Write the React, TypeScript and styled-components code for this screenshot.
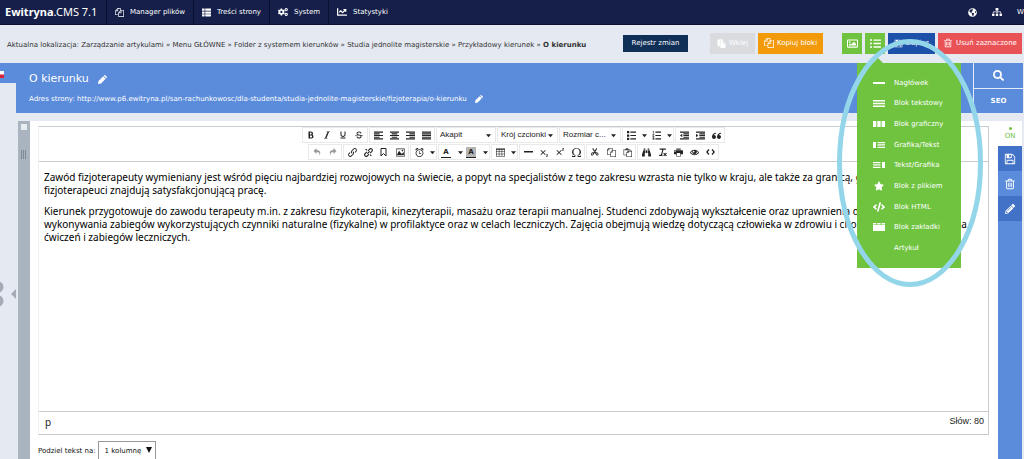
import React from 'react';
import styled, { createGlobalStyle } from 'styled-components';
import {
  FaBinoculars, FaChartLine, FaCode, FaCogs, FaGlobeAmericas, FaListUl, FaPaste, FaPencilAlt,
  FaRegImage, FaSearch, FaSitemap, FaStar, FaThList,
} from 'react-icons/fa';
import {
  ImAlarm, ImBold, ImCopy, ImEye, ImImage, ImIndentDecrease, ImIndentIncrease,
  ImItalic, ImLink, ImList, ImListNumbered, ImOmega, ImPaste, ImPrinter, ImQuotesLeft, ImRedo2,
  ImScissors, ImStrikethrough, ImSubscript, ImSuperscript, ImTable2, ImUnderline, ImUndo2,
  ImParagraphCenter, ImParagraphJustify, ImParagraphLeft, ImParagraphRight,
} from 'react-icons/im';

const color = {
  navy: '#151f49',
  page: '#e5e9f1',
  blue: '#5b8cdb',
  deepBlue: '#4272c8',
  green: '#6fc33f',
  rail: '#a9b4c0',
  line: '#c9cccd',
};
const ui = '"DejaVu Sans", Verdana, sans-serif';

const GlobalStyle = createGlobalStyle`
  *, *::before, *::after { box-sizing: border-box; }
  html, body { margin: 0; overflow: hidden; }
  body { background: ${color.page}; color: #333; font: 7px/10px ${ui}; }
  button, select { font: inherit; color: inherit; margin: 0; padding: 0; border: 0; background: none; }
  a { color: inherit; text-decoration: none; }
  svg { display: block; flex: none; }
`;

const Page = styled.div`
  display: flex;
  flex-direction: column;
  min-height: 100vh;
`;

/* Top navigation */
const Nav = styled.nav`
  display: flex;
  height: 25px;
  background: ${color.navy};
  border-bottom: 1px solid #0c1230;
  color: #fff;
`;
const Brand = styled.a`
  display: flex;
  align-items: center;
  width: 106px;
  padding-left: 5px;
  font: 11px/14px "Noto Sans", sans-serif;
`;
const NavLink = styled.a`
  display: flex;
  align-items: center;
  gap: 6px;
  padding: 0 8px;
  border-left: 1px solid #0a1030;
`;
const NavTools = styled.div`
  display: flex;
  align-items: center;
  gap: 15px;
  width: 56px;
  margin-left: auto;
  overflow: hidden;
`;

/* Breadcrumb and page actions */
const ActionBar = styled.div`
  display: flex;
  align-items: center;
  height: 38px;
  padding: 0 2px 2px 7px;
`;
const Crumbs = styled.div`
  flex: 1;
  white-space: nowrap;
  padding-top: 4px;
`;
const Actions = styled.div`
  display: flex;
  align-items: center;
  gap: 3px;
  color: #fff;
`;
const Action = styled.button<{ $bg: string; $w: number; $small?: boolean; $after?: number }>`
  display: flex;
  align-items: center;
  justify-content: center;
  gap: 3px;
  width: ${p => p.$w}px;
  height: ${p => (p.$small ? 17 : 21)}px;
  margin-right: ${p => p.$after ?? 0}px;
  background: ${p => p.$bg};
  white-space: nowrap;
`;
const MenuAnchor = styled.div`
  position: relative;
`;
const BlockMenu = styled.ul`
  position: absolute;
  z-index: 2;
  top: 30px;
  left: -8px;
  display: grid;
  grid-auto-rows: 1fr;
  width: 104px;
  height: 205px;
  margin: 0;
  padding: 10px 0 9px;
  list-style: none;
  background: ${color.green};
  &::before {
    content: '';
    position: absolute;
    left: 16px;
    top: -5px;
    border: 5px solid transparent;
    border-top: 0;
    border-bottom-color: ${color.green};
  }
`;
const BlockItem = styled.button`
  display: grid;
  grid-template-columns: 12px 1fr;
  column-gap: 9px;
  align-items: center;
  width: 100%;
  height: 100%;
  padding-left: 16px;
  text-align: left;
  svg { justify-self: center; }
`;

/* Article heading */
const Main = styled.div`
  display: grid;
  grid-template-columns: 16px 1fr;
  flex: 1;
`;
const Side = styled.aside`
  display: flex;
  flex-direction: column;
`;
const LangTab = styled.div`
  height: 20px;
  padding-top: 8px;
  background: ${color.blue};
`;
const SideTools = styled.div`
  display: flex;
  align-items: center;
  justify-content: space-between;
  margin-top: 198px;
`;
const Content = styled.main`
  display: flex;
  flex-direction: column;
  gap: 8px;
  padding-right: 1px;
`;
const Heading = styled.header`
  display: flex;
  height: 50px;
  background: ${color.blue};
  color: #fff;
`;
const Titles = styled.div`
  flex: 1;
  padding: 8px 0 0 13px;
`;
const Title = styled.h1`
  display: flex;
  align-items: center;
  gap: 9px;
  margin: 0 0 7px;
  font: 11px/16px ${ui};
`;
const Address = styled.div`
  display: flex;
  align-items: center;
  gap: 8px;
`;
const HeadTools = styled.div`
  display: grid;
  grid-template-rows: 25px 1fr;
  width: 50px;
  border-left: 1px solid #e4ecf9;
  font-weight: bold;
`;
const HeadButton = styled.button`
  display: flex;
  align-items: center;
  justify-content: center;
  & + & { border-top: 1px solid #e4ecf9; }
`;

/* Editor */
const Workspace = styled.section`
  display: flex;
  flex: 1;
  padding: 0 1px 0 2px;
`;
const DragRail = styled.div`
  display: flex;
  flex-direction: column;
  align-items: center;
  gap: 20px;
  width: 12px;
  padding-top: 3px;
  background: ${color.rail};
`;
const Tick = styled.input`
  appearance: none;
  width: 6px;
  height: 6px;
  margin: 0;
  background: #e9ecf0;
`;
const Card = styled.div`
  flex: 1;
  padding: 5px 9px 0 8px;
  background: #fff;
`;
const Editor = styled.div`
  display: flex;
  flex-direction: column;
  border: 1px solid ${color.line};
  border-left-color: #f1f1f1;
  color: #222;
`;
const Toolbar = styled.div`
  display: grid;
  row-gap: 1px;
  padding-bottom: 1px;
  border-bottom: 1px solid ${color.line};
`;
const ToolRow = styled.div`
  display: flex;
  justify-content: center;
  gap: 1px;
`;
const Group = styled.div`
  display: flex;
  height: 16px;
  border: 1px solid #e9e9e9;
`;
const Tool = styled.button<{ $split?: boolean; $faded?: boolean }>`
  display: flex;
  align-items: center;
  justify-content: space-between;
  width: ${p => (p.$split ? 25 : 16)}px;
  padding: 0 ${p => (p.$split ? 1 : 4)}px 0 4px;
  opacity: ${p => (p.$faded ? 0.45 : 1)};
`;
const Pick = styled.label<{ $w: number }>`
  display: flex;
  align-items: center;
  width: ${p => p.$w}px;
  padding: 0 4px 0 3px;
  font: 8px/12px "Liberation Sans", Arial, sans-serif;
  select { appearance: none; flex: 1; min-width: 0; }
`;
const Swatch = styled.span<{ $bg?: string }>`
  width: 10px;
  margin-left: -2px;
  border-bottom: 1px solid #222;
  background: ${p => p.$bg ?? 'none'};
  font-weight: bold;
  text-align: center;
`;
const Article = styled.article`
  height: 249px;
  padding: 9px 0 0 5px;
  color: #000;
  font: 10px/13px "Noto Sans", Tahoma, sans-serif;
  white-space: nowrap;
  overflow: hidden;
  p { margin: 0 0 8px; }
`;
const StatusBar = styled.footer`
  display: flex;
  justify-content: space-between;
  height: 23px;
  padding: 4px 4px 0 6px;
  border-top: 1px solid ${color.line};
  font: 10px/13px "Noto Sans", sans-serif;
`;
const Words = styled.span`
  font: 9px/11px "Liberation Sans", Arial, sans-serif;
`;
const Columns = styled.label`
  display: flex;
  align-items: center;
  gap: 2px;
  height: 20px;
  margin-top: 6px;
  color: #111;
`;
const ColumnPick = styled.span`
  display: flex;
  align-items: center;
  width: 58px;
  height: 20px;
  padding: 0 3px 0 6px;
  border: 1px solid #999;
  select { appearance: none; flex: 1; }
`;
const BlockTools = styled.div`
  display: flex;
  flex-direction: column;
  width: 24px;
  background: ${color.blue};
  color: #fff;
`;
const Status = styled.div`
  height: 25px;
  padding-top: 5px;
  background: #fff;
  color: ${color.green};
  text-align: center;
  line-height: 9px;
  &::before {
    content: '';
    display: block;
    width: 3px;
    height: 3px;
    margin: 1px auto 2px;
    border-radius: 50%;
    background: ${color.green};
  }
`;
const BlockTool = styled.button<{ $dark?: boolean }>`
  display: flex;
  align-items: center;
  justify-content: center;
  height: 25px;
  background: ${p => (p.$dark ? color.deepBlue : color.blue)};
`;
const Marker = styled.svg`
  position: absolute;
  z-index: 3;
  top: 36px;
  right: 38px;
  pointer-events: none;
`;

const Fa = ({ d, size }: { d: string; size: number }) => (
  <svg width={size} height={size} viewBox="0 0 1792 1792" fill="currentColor"><path d={d} /></svg>
);
const filesPath = 'M1696 384q40 0 68 28t28 68v1216q0 40-28 68t-68 28h-960q-40 0-68-28t-28-68v-288h-544q-40 0-68-28t-28-68v-672q0-40 20-88t48-76l408-408q28-28 76-48t88-20h416q40 0 68 28t28 68v328q68-40 128-40h416zm-544 213l-299 299h299v-299zm-640-384l-299 299h299v-299zm196 647l316-316v-416h-384v416q0 40-28 68t-68 28h-416v640h512v-256q0-40 20-88t48-76zm956 804v-1152h-384v416q0 40-28 68t-68 28h-416v640h896z';
const floppyPath = 'M512 1536h768v-384h-768v384zm896 0h128v-896q0-14-10-38.5t-20-34.5l-281-281q-10-10-34-20t-39-10v416q0 40-28 68t-68 28h-576q-40 0-68-28t-28-68v-416h-128v1280h128v-416q0-40 28-68t68-28h832q40 0 68 28t28 68v416zm-384-928v-320q0-13-9.5-22.5t-22.5-9.5h-192q-13 0-22.5 9.5t-9.5 22.5v320q0 13 9.5 22.5t22.5 9.5h192q13 0 22.5-9.5t9.5-22.5zm640 32v928q0 40-28 68t-68 28h-1344q-40 0-68-28t-28-68v-1344q0-40 28-68t68-28h928q40 0 88 20t76 48l280 280q28 28 48 76t20 88z';
const trashPath = 'M704 736v576q0 14-9 23t-23 9h-64q-14 0-23-9t-9-23v-576q0-14 9-23t23-9h64q14 0 23 9t9 23zm256 0v576q0 14-9 23t-23 9h-64q-14 0-23-9t-9-23v-576q0-14 9-23t23-9h64q14 0 23 9t9 23zm256 0v576q0 14-9 23t-23 9h-64q-14 0-23-9t-9-23v-576q0-14 9-23t23-9h64q14 0 23 9t9 23zm128 724v-948h-896v948q0 22 7 40.5t14.5 27 10.5 8.5h832q3 0 10.5-8.5t14.5-27 7-40.5zm-672-1076h448l-48-117q-7-9-17-11h-317q-10 2-17 11zm928 32v64q0 14-9 23t-23 9h-96v948q0 83-47 143.5t-113 60.5h-832q-66 0-113-58.5t-47-141.5v-952h-96q-14 0-23-9t-9-23v-64q0-14 9-23t23-9h309l70-167q15-37 54-63t79-26h320q40 0 79 26t54 63l70 167h309q14 0 23 9t9 23z';

const Caret = ({ w = 5 }: { w?: number }) => (
  <svg width={w} height={w} viewBox="0 0 6 6" fill="currentColor"><path d="M0 1.5h6L3 5z" /></svg>
);
const SelectArrow = () => (
  <svg width="6" height="8" viewBox="0 0 6 8" fill="currentColor"><path d="M0 0h6L3 6z" /></svg>
);
const Pencil = ({ size }: { size: number }) => (
  <svg width={size} height={size} viewBox="0 0 10 10" fill="currentColor"><path d="M0 10l.6-3.400L5.800 1.500l2.700 2.700L3.400 9.400zM6.400.9l.7-.7q.5-.4 1 0l1.700 1.700q.4.500 0 1l-.7.700z" /></svg>
);
const Bars = ({ d }: { d: string }) => (
  <svg width="12" height="8" viewBox="0 0 12 8" fill="#fff"><path d={d} /></svg>
);
const Unlink = () => (
  <svg width="9" height="9" viewBox="0 0 16 16" fill="none" stroke="currentColor" strokeWidth="2">
    <path d="M7 5l3-3a2.8 2.8 0 0 1 4 4l-3 3M9 11l-3 3a2.8 2.8 0 0 1-4-4l3-3M3 2l2 2M13 14l-2-2M6 10l4-4" />
  </svg>
);
const ClearFormat = () => (
  <svg width="9" height="9" viewBox="0 0 16 16" fill="none" stroke="currentColor" strokeWidth="2">
    <path d="M3 2h11M9 2L6 13M2 13h6M10 9l5 5M15 9l-5 5" />
  </svg>
);
const Rule = () => (
  <svg width="9" height="8" viewBox="0 0 9 8"><path d="M0 3h9v1.500H0z" fill="currentColor" /></svg>
);

const blocks: [string, React.ReactNode][] = [
  ['Nagłówek', <Bars d="M0 3h12v2H0z" />],
  ['Blok tekstowy', <Bars d="M0 1h12v1.500H0zM0 3.700h12v1.500H0zM0 6.400h12V8H0z" />],
  ['Blok graficzny', <Bars d="M0 1h3.300v6H0zM4.300 1h3.300v6H4.300zM8.600 1H12v6H8.600z" />],
  ['Grafika/Tekst', <Bars d="M0 1h3v6H0zM4.500 1H12v1.300H4.500zM4.500 3.300H12v1.300H4.500zM4.500 5.700H12V7H4.500z" />],
  ['Tekst/Grafika', <Bars d="M9 1h3v6H9zM0 1h7.500v1.300H0zM0 3.300h7.500v1.300H0zM0 5.700h7.500V7H0z" />],
  ['Blok z plikiem', <FaStar size={10} />],
  ['Blok HTML', <FaCode size={12} />],
  ['Blok zakładki', <Bars d="M0 0h3.300v1.500H0zM4.300 0h3.300v1.500H4.300zM8.600 0H12v1.500H8.600zM0 2h12v6H0z" />],
  ['Artykuł', <span />],
];

type ToolSpec = { name: string; icon: React.ReactNode; split?: boolean; faded?: boolean };
const t = (name: string, icon: React.ReactNode, split = false, faded = false): ToolSpec => ({ name, icon, split, faded });

const inline = [t('Pogrubienie', <ImBold size={8} />), t('Kursywa', <ImItalic size={8} />), t('Podkreślenie', <ImUnderline size={8} />), t('Przekreślenie', <ImStrikethrough size={8} />)];
const align = [t('Do lewej', <ImParagraphLeft size={9} />), t('Do środka', <ImParagraphCenter size={9} />), t('Do prawej', <ImParagraphRight size={9} />), t('Wyjustuj', <ImParagraphJustify size={9} />)];
const lists = [t('Lista wypunktowana', <ImList size={9} />, true), t('Lista numerowana', <ImListNumbered size={9} />, true)];
const indent = [t('Zmniejsz wcięcie', <ImIndentDecrease size={9} />), t('Zwiększ wcięcie', <ImIndentIncrease size={9} />), t('Cytat', <ImQuotesLeft size={9} />)];
const secondRow: ToolSpec[][] = [
  [t('Cofnij', <ImUndo2 size={8} />, false, true), t('Ponów', <ImRedo2 size={8} />, false, true)],
  [t('Wstaw łącze', <ImLink size={9} />), t('Usuń łącze', <Unlink />), t('Zakładka', <svg width="7" height="9" viewBox="0 0 7 9" fill="none" stroke="currentColor"><path d="M1 .5h5v7.500L3.500 5.500 1 8z" /></svg>), t('Obraz', <ImImage size={9} />)],
  [t('Data', <ImAlarm size={9} />, true)],
  [t('Kolor tekstu', <Swatch>A</Swatch>, true), t('Kolor tła', <Swatch $bg="#b5b5b5">A</Swatch>, true)],
  [t('Tabela', <ImTable2 size={9} />, true)],
  [t('Linia pozioma', <Rule />), t('Indeks dolny', <ImSubscript size={9} />), t('Indeks górny', <ImSuperscript size={9} />), t('Znak specjalny', <ImOmega size={9} />)],
  [t('Wytnij', <ImScissors size={8} />), t('Kopiuj', <ImCopy size={9} />), t('Wklej', <ImPaste size={9} />)],
  [t('Znajdź', <FaBinoculars size={9} />), t('Usuń formatowanie', <ClearFormat />), t('Drukuj', <ImPrinter size={9} />), t('Podgląd', <ImEye size={9} />), t('Kod źródłowy', <svg width="9" height="8" viewBox="0 0 9 8" fill="none" stroke="currentColor" strokeWidth="1.2"><path d="M3 1.500L.8 4 3 6.500M6 1.500L8.200 4 6 6.500" /></svg>)],
];

const Tools = ({ items }: { items: ToolSpec[] }) => (
  <Group>
    {items.map(i => (
      <Tool key={i.name} aria-label={i.name} $split={i.split} $faded={i.faded}>
        {i.icon}
        {i.split && <Caret />}
      </Tool>
    ))}
  </Group>
);
const Dropdown = ({ text, w, name }: { text: string; w: number; name: string }) => (
  <Group>
    <Pick $w={w}>
      <select aria-label={name}><option>{text}</option></select>
      <Caret />
    </Pick>
  </Group>
);

export default function App() {
  return (
    <Page>
      <GlobalStyle />
      <Nav>
        <Brand href="#"><b>Ewitryna</b>.CMS 7.1</Brand>
        <NavLink href="#"><Fa d={filesPath} size={9} />Manager plików</NavLink>
        <NavLink href="#"><FaThList size={9} />Treści strony</NavLink>
        <NavLink href="#"><FaCogs size={10} />System</NavLink>
        <NavLink href="#"><FaChartLine size={10} />Statystyki</NavLink>
        <NavTools>
          <a href="#" aria-label="Strona"><FaGlobeAmericas size={9} /></a>
          <a href="#" aria-label="Mapa strony"><FaSitemap size={10} /></a>
          <a href="#">W</a>
        </NavTools>
      </Nav>

      <ActionBar>
        <Crumbs>
          Aktualna lokalizacja: Zarządzanie artykulami » Menu GŁÓWNE » Folder z systemem kierunków » Studia jednolite
          magisterskie » Przykładowy kierunek » <b>O kierunku</b>
        </Crumbs>
        <Actions>
          <Action $bg="#0f2f57" $w={65} $small $after={19}>Rejestr zmian</Action>
          <Action $bg="#d9dbdf" $w={45}><FaPaste size={9} />Wklej</Action>
          <Action $bg="#f39a0a" $w={65} $after={16}><Fa d={filesPath} size={10} />Kopiuj bloki</Action>
          <Action $bg={color.green} $w={20} aria-label="Grafika"><FaRegImage size={11} /></Action>
          <MenuAnchor>
            <Action $bg={color.green} $w={20} aria-label="Dodaj blok"><FaListUl size={11} /></Action>
            <BlockMenu>
              {blocks.map(([name, icon]) => (
                <li key={name}><BlockItem>{icon}{name}</BlockItem></li>
              ))}
            </BlockMenu>
          </MenuAnchor>
          <Action $bg="#1d50a8" $w={47}><Fa d={floppyPath} size={9} />Zapisz</Action>
          <Action $bg="#ea5356" $w={84}><Fa d={trashPath} size={10} />Usuń zaznaczone</Action>
        </Actions>
      </ActionBar>

      <Main>
        <Side>
          <LangTab>
            <svg width="4" height="7" viewBox="0 0 4 7"><path fill="#fff" d="M0 0h4v4H0z" /><path fill="#d8213b" d="M0 3.500h4V7H0z" /></svg>
          </LangTab>
          <SideTools>
            <svg width="4" height="26" viewBox="0 0 4 26" fill="#a5abb5"><circle cx="-2" cy="6" r="5.500" /><circle cx="-2" cy="20" r="5.500" /></svg>
            <svg width="5" height="10" viewBox="0 0 5 10" fill="#a5abb5"><path d="M5 0v10L0 5z" /></svg>
          </SideTools>
        </Side>
        <Content>
          <Heading>
            <Titles>
              <Title>O kierunku <Pencil size={9} /></Title>
              <Address>
                <a href="#">Adres strony: http://www.p6.ewitryna.pl/san-rachunkowosc/dla-studenta/studia-jednolite-magisterskie/fizjoterapia/o-kierunku</a>
                <Pencil size={8} />
              </Address>
            </Titles>
            <HeadTools>
              <HeadButton aria-label="Szukaj"><FaSearch size={11} /></HeadButton>
              <HeadButton>SEO</HeadButton>
            </HeadTools>
          </Heading>

          <Workspace>
            <DragRail>
              <Tick type="checkbox" aria-label="Zaznacz blok" />
              <svg width="6" height="9" viewBox="0 0 6 9" fill="#7e8996"><path d="M0 0h1v9H0zM2 0h1v9H2zM4 0h1v9H4z" /></svg>
            </DragRail>
            <Card>
              <Editor>
                <Toolbar>
                  <ToolRow>
                    <Tools items={inline} />
                    <Tools items={align} />
                    <Dropdown name="Format" text="Akapit" w={58} />
                    <Dropdown name="Czcionka" text="Krój czcionki" w={59} />
                    <Dropdown name="Rozmiar" text="Rozmiar c..." w={60} />
                    <Tools items={lists} />
                    <Tools items={indent} />
                  </ToolRow>
                  <ToolRow>
                    {secondRow.map(g => <Tools key={g[0].name} items={g} />)}
                  </ToolRow>
                </Toolbar>
                <Article>
                  <p>
                    Zawód fizjoterapeuty wymieniany jest wśród pięciu najbardziej rozwojowych na świecie, a popyt na specjalistów z tego zakresu wzrasta nie tylko w kraju, ale także za granicą, gdzie<br />
                    fizjoterapeuci znajdują satysfakcjonującą pracę.
                  </p>
                  <p>
                    Kierunek przygotowuje do zawodu terapeuty m.in. z zakresu fizykoterapii, kinezyterapii, masażu oraz terapii manualnej. Studenci zdobywają wykształcenie oraz uprawnienia do<br />
                    wykonywania zabiegów wykorzystujących czynniki naturalne (fizykalne) w profilaktyce oraz w celach leczniczych. Zajęcia obejmują wiedzę dotyczącą człowieka w zdrowiu i chorobie oraz prowadzenia<br />
                    ćwiczeń i zabiegów leczniczych.
                  </p>
                </Article>
                <StatusBar><span>p</span><Words>Słów: 80</Words></StatusBar>
              </Editor>
              <Columns>
                Podziel tekst na:
                <ColumnPick><select><option>1 kolumnę</option></select><SelectArrow /></ColumnPick>
              </Columns>
            </Card>
            <BlockTools>
              <Status>ON</Status>
              <BlockTool $dark aria-label="Zapisz blok"><Fa d={floppyPath} size={12} /></BlockTool>
              <BlockTool aria-label="Usuń blok"><Fa d={trashPath} size={12} /></BlockTool>
              <BlockTool $dark aria-label="Edytuj blok"><FaPencilAlt size={10} /></BlockTool>
            </BlockTools>
          </Workspace>
        </Content>
      </Main>

      <Marker width="152" height="254" viewBox="0 0 152 254" fill="none" stroke="#93d5e9" strokeWidth="5">
        <ellipse cx="76" cy="127" rx="70.500" ry="121.500" />
      </Marker>
    </Page>
  );
}
